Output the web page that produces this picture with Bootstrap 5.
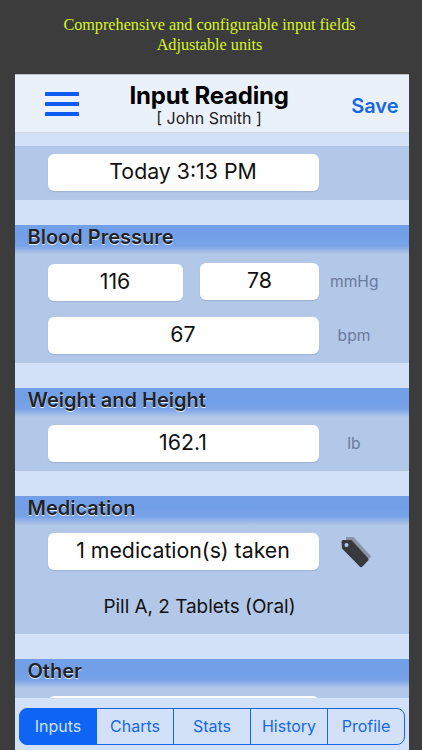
<!DOCTYPE html>
<html lang="en"><head><meta charset="utf-8"><title>Input Reading</title>
<link href="https://cdn.jsdelivr.net/npm/bootstrap@5.3.0/dist/css/bootstrap.min.css" rel="stylesheet">
<style>
html,body{height:750px;overflow:hidden;background:#3c3c3c;font-family:Inter,"Liberation Sans",sans-serif}
.shot{height:750px;display:flex;flex-direction:column}
.caption{height:73.5px;padding:15px 3px 0 0;text-align:center;color:#d8f528;font-family:"Liberation Serif",serif;font-size:16.2px;line-height:20px;flex:none}
.phone{flex:1;min-height:0;margin:0 13.5px 0 15px;background:#d2e1f8;display:flex;flex-direction:column;border-top:1px solid #b9bfc9}
.topbar{height:58px;flex:none;background:#ebf1fb;border-bottom:1px solid #d3d9e3;padding:0 10px 0 30px;flex-wrap:nowrap;align-items:stretch}
.burger{width:34px;flex:none;display:flex;align-items:center;margin-top:-1px}
.title-box{flex:1;text-align:center;padding:9px 12px 0 0}
.title-main{font-size:24px;font-weight:700;line-height:24px;color:#000;letter-spacing:-.2px}
.title-sub{font-size:16px;line-height:18px;margin-top:1px;color:#222}
.save-link{color:#1668e3;font-size:20px;font-weight:600;text-decoration:none;align-self:center;margin-top:5px;padding:0}
.scroller{flex:1;min-height:0;overflow:hidden;padding-top:13px}
.band{background:#b3c7e8;padding:8px 0 9px 32.5px}
.band-tall{padding:9px 0 9px 32.5px}
.gap-light{height:25px}
.sect{height:29px;padding:0 0 0 12.5px;font-size:20px;font-weight:600;line-height:25px;color:#1f2329;text-shadow:0 1px 0 #e8eef9;background:linear-gradient(#72a0e8 0,#72a0e8 45%,#79a3e8 72%,#b3c7e8 100%)}
.vrow{display:flex;align-items:center}
.vrow + .vrow{margin-top:16px}
.field{height:37px;background:#fff;border-radius:6px;text-align:center;color:#111;font-size:21.3px;line-height:35.5px;box-shadow:0 1px 1px rgba(90,110,150,.25);flex:none}
.w-full{width:271px}
.w-a{width:135px;margin-top:1px}
.w-b{width:119px;margin-left:17.5px;margin-top:-1px}
.unit{flex:1;text-align:center;color:#6b7a9d;font-size:15.6px;padding:1px 19px 0 0}
.pill{text-align:center;font-size:18.9px;color:#111;line-height:22px;padding:26px 57px 7px 0}
.tagbox{flex:1;display:flex;justify-content:center;padding:1px 15px 0 0}
.tabwrap{flex:none;height:52px;background:#d2e1f8;padding:10px 3.5px 5px 4px}
.tabs{width:100%;height:37px}
.tabs .btn{--bs-btn-color:#1668e3;--bs-btn-border-color:#1668e3;--bs-btn-active-bg:#0d64f5;--bs-btn-active-border-color:#0d64f5;--bs-btn-active-color:#cfe0fb;font-size:16px;padding:0;line-height:35px;border-width:1.5px;border-radius:8px;flex:1 1 0}
.tabs .btn:not(:first-child){margin-left:-1px}
</style></head>
<body>
<div class="shot">
<div class="caption">Comprehensive and configurable input fields<br>Adjustable units</div>
<div class="phone">
 <nav class="navbar topbar d-flex">
  <a class="burger" href="#" aria-label="Menu"><svg width="34" height="26" viewBox="0 0 34 26"><g fill="#0d5ef0"><rect y="2" width="34" height="4" rx=".6"/><rect y="12" width="34" height="4" rx=".6"/><rect y="22" width="34" height="4" rx=".6"/></g></svg></a>
  <div class="title-box"><div class="title-main">Input Reading</div><div class="title-sub">[ John Smith ]</div></div>
  <a class="save-link" href="#">Save</a>
 </nav>
 <div class="scroller">
  <div class="band"><div class="vrow"><div class="field w-full">Today 3:13 PM</div></div></div>
  <div class="gap-light"></div>
  <div class="sect">Blood Pressure</div>
  <div class="band band-tall">
   <div class="vrow"><div class="field w-a">116</div><div class="field w-b">78</div><div class="unit">mmHg</div></div>
   <div class="vrow"><div class="field w-full">67</div><div class="unit">bpm</div></div>
  </div>
  <div class="gap-light"></div>
  <div class="sect">Weight and Height</div>
  <div class="band"><div class="vrow"><div class="field w-full">162.1</div><div class="unit">lb</div></div></div>
  <div class="gap-light"></div>
  <div class="sect">Medication</div>
  <div class="band">
   <div class="vrow"><div class="field w-full">1 medication(s) taken</div>
    <div class="tagbox"><svg width="32" height="34" viewBox="0 0 32 34"><path d="M6 2h7.500l17 18.500a1.500 1.500 0 0 1 0 2l-1.500 1.500-17-18H6z" fill="#8a94a8"/><path d="M1.500 6.500a1.500 1.500 0 0 1 1.500-1.500h8.500L28 23a2 2 0 0 1 0 2.800L22.500 31.500a2 2 0 0 1-2.800 0L2 13.500z" fill="#38393c"/><circle cx="6.500" cy="10" r="2" fill="#b3c7e8"/></svg></div></div>
   <div class="pill">Pill A, 2 Tablets (Oral)</div>
  </div>
  <div class="gap-light"></div>
  <div class="sect">Other</div>
  <div class="band"><div class="vrow"><div class="field w-full">&nbsp;</div></div></div>
 </div>
 <div class="tabwrap"><div class="btn-group tabs" role="group">
  <button type="button" class="btn btn-outline-primary active">Inputs</button>
  <button type="button" class="btn btn-outline-primary">Charts</button>
  <button type="button" class="btn btn-outline-primary">Stats</button>
  <button type="button" class="btn btn-outline-primary">History</button>
  <button type="button" class="btn btn-outline-primary">Profile</button>
 </div></div>
</div>
</div>
<script src="https://cdn.jsdelivr.net/npm/bootstrap@5.3.0/dist/js/bootstrap.bundle.min.js"></script>
</body></html>
